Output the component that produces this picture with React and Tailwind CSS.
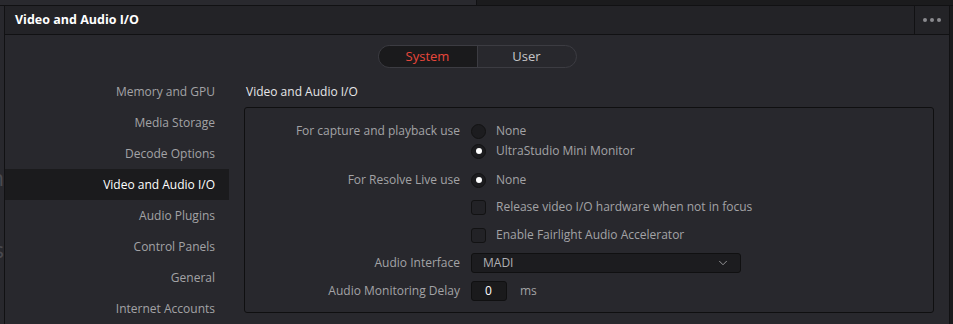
import { ChevronDown } from "lucide-react";

const NAV = [
  "Memory and GPU",
  "Media Storage",
  "Decode Options",
  "Video and Audio I/O",
  "Audio Plugins",
  "Control Panels",
  "General",
  "Internet Accounts",
];

function Radio({ on }) {
  return (
    <div className="w-[15px] h-[15px] rounded-full bg-[#1c1c1f] border border-[#121213] flex items-center justify-center">
      {on && <div className="w-[6px] h-[6px] rounded-full bg-white" />}
    </div>
  );
}

function Check() {
  return <div className="w-[15px] h-[15px] rounded-[3px] bg-[#222226] border border-[#121213]" />;
}

function Row({ label, className = "", children }) {
  return (
    <div className={"flex items-center h-[20px] " + className}>
      <div className="w-[226px] text-right pr-[11px] text-[#a3a3a6]">{label}</div>
      <div className="flex items-center">{children}</div>
    </div>
  );
}

export default function App() {
  return (
    <div
      className="w-[953px] h-[324px] overflow-hidden bg-[#1b1b1d] text-[12px] flex flex-col"
      style={{ fontFamily: '"Open Sans", "Noto Sans", sans-serif' }}
    >
      {/* background window strip */}
      <div className="h-[6px] flex shrink-0 border-b border-[#111113]">
        <div className="w-[477px] bg-[#29292e] border-r border-[#111113]" />
        <div className="flex-1 bg-[#1b1b1d]" />
      </div>

      <div className="flex flex-1 min-h-0">
        <div className="w-[4px] bg-[#28282d] overflow-hidden flex flex-col items-end text-[22px] text-[#4a4a50] leading-none">
          <div className="mt-[160px] whitespace-nowrap">n</div>
          <div className="mt-[50px] whitespace-nowrap">s</div>
        </div>

        {/* dialog */}
        <div className="w-[946px] border-l border-r border-[#111113] flex flex-col bg-[#28282d]">
          <div className="h-[29px] flex items-center bg-[#232327] border-b border-[#111113] shrink-0">
            <div className="flex-1 pl-[10px] text-white font-bold text-[12.5px]">Video and Audio I/O</div>
            <div className="w-[35px] h-full border-l border-[#111113] flex items-center justify-center gap-[3px]">
              <span className="w-[4px] h-[4px] rounded-full bg-[#8a8a8e]" />
              <span className="w-[4px] h-[4px] rounded-full bg-[#8a8a8e]" />
              <span className="w-[4px] h-[4px] rounded-full bg-[#8a8a8e]" />
            </div>
          </div>

          <div className="flex justify-center pt-[10px] shrink-0">
            <div className="flex h-[23px] w-[199px] rounded-full border border-[#3c3c42] overflow-hidden">
              <div className="w-[99px] bg-[#1a1a1c] text-[#e8473b] flex items-center justify-center text-[13px] border-r border-[#3c3c42]">
                System
              </div>
              <div className="flex-1 text-[#c6c6c9] flex items-center justify-center text-[13px]">User</div>
            </div>
          </div>

          <div className="flex pt-[8px] flex-1 min-h-0">
            {/* sidebar */}
            <div className="w-[224px] shrink-0 flex flex-col">
              {NAV.map((item) => {
                const active = item === "Video and Audio I/O";
                return (
                  <div
                    key={item}
                    className={
                      "h-[31px] shrink-0 flex items-center justify-end pr-[14px] " +
                      (active ? "bg-[#1b1b1d] text-white" : "text-[#a3a3a6]")
                    }
                  >
                    {item}
                  </div>
                );
              })}
            </div>

            {/* content */}
            <div className="ml-[15px] w-[690px] flex flex-col">
              <div className="h-[31px] flex items-center pl-[2px] text-[#e6e6e8]">Video and Audio I/O</div>
              <div className="h-[206px] border border-[#0f0f10] rounded-[3px] flex flex-col pt-[13px]">
                <Row label="For capture and playback use">
                  <Radio />
                  <span className="ml-[10px] text-[#a3a3a6]">None</span>
                </Row>
                <Row label="">
                  <Radio on />
                  <span className="ml-[10px] text-[#a3a3a6]">UltraStudio Mini Monitor</span>
                </Row>
                <Row label="For Resolve Live use" className="mt-[9px]">
                  <Radio on />
                  <span className="ml-[10px] text-[#a3a3a6]">None</span>
                </Row>
                <Row label="" className="mt-[7px]">
                  <Check />
                  <span className="ml-[10px] text-[#a3a3a6]">Release video I/O hardware when not in focus</span>
                </Row>
                <Row label="" className="mt-[8px]">
                  <Check />
                  <span className="ml-[10px] text-[#a3a3a6]">Enable Fairlight Audio Accelerator</span>
                </Row>
                <Row label="Audio Interface" className="mt-[8px]">
                  <div className="w-[270px] h-[20px] bg-[#1c1c1f] border border-[#101011] rounded-[3px] flex items-center pl-[11px] pr-[10px] text-[#b0b0b3]">
                    <span className="flex-1">MADI</span>
                    <ChevronDown size={14} strokeWidth={1.5} className="text-[#a3a3a6]" />
                  </div>
                </Row>
                <Row label="Audio Monitoring Delay" className="mt-[8px]">
                  <div className="w-[36px] h-[20px] bg-[#1a1a1c] border border-[#101011] rounded-[3px] flex items-center pl-[13px] text-white">
                    0
                  </div>
                  <span className="ml-[13px] text-[#a3a3a6]">ms</span>
                </Row>
              </div>
            </div>
          </div>
        </div>
      </div>
    </div>
  );
}
